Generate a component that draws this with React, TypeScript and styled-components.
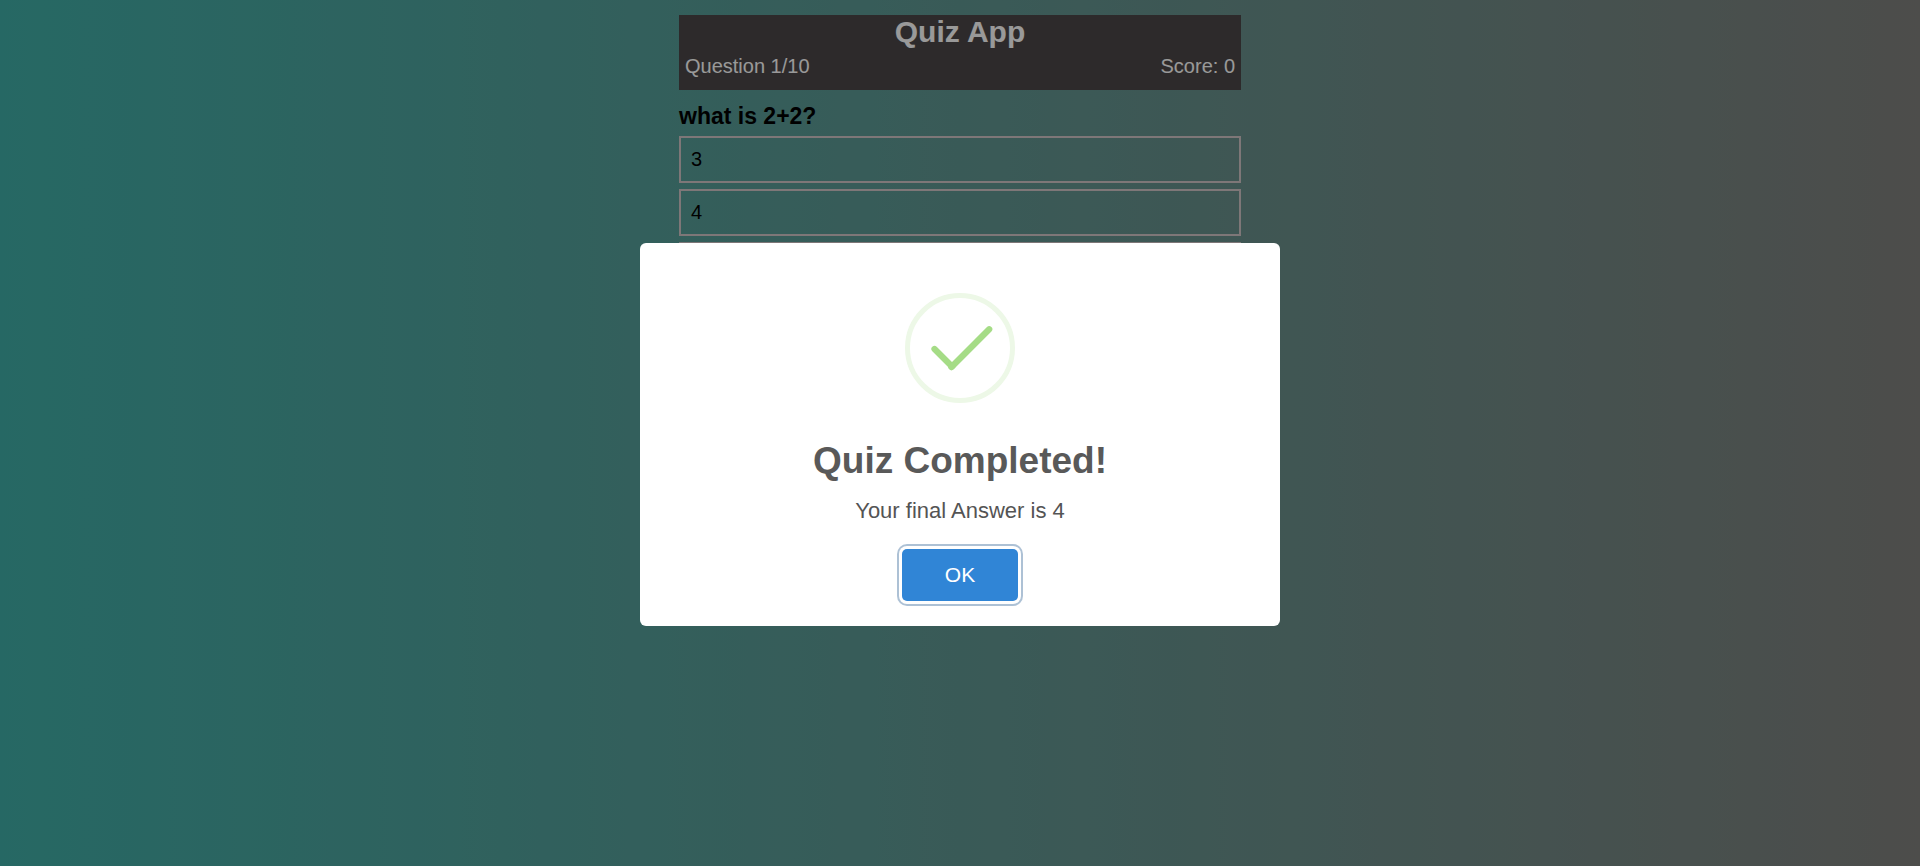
import React from "react";
import styled, { createGlobalStyle } from "styled-components";

const GlobalStyle = createGlobalStyle`
  *, *::before, *::after { box-sizing: border-box; }
  body {
    margin: 0;
    font-family: "Liberation Sans", Arial, Helvetica, sans-serif;
    color: #000;
  }
  h1, h2, p { margin: 0; }
`;

const Page = styled.div`
  min-height: 100vh;
  padding-top: 15px;
  background: linear-gradient(to right, #40aea7, #80807d);
`;

const Quiz = styled.main`
  width: 100%;
  max-width: 562px;
  margin: 0 auto;
`;

const Header = styled.header`
  display: flex;
  flex-direction: column;
  gap: 6px;
  padding: 0 6px 12px;
  background: #4c4748;
  color: #fff;
`;

const AppTitle = styled.h1`
  font-size: 30px;
  line-height: 34px;
  text-align: center;
`;

const Status = styled.div`
  display: flex;
  justify-content: space-between;
  font-size: 20px;
  line-height: 23px;
`;

const Question = styled.h2`
  margin: 13px 0 7px;
  font-size: 23px;
  line-height: 26px;
`;

const Options = styled.div`
  display: flex;
  flex-direction: column;
  gap: 6px;
`;

const Option = styled.button`
  padding: 10px;
  border: 2px solid #d2c6c8;
  background: transparent;
  color: #000;
  font: 20px/23px "Liberation Sans", Arial, sans-serif;
  text-align: left;
  cursor: pointer;
`;

const Backdrop = styled.div`
  position: fixed;
  inset: 0;
  display: flex;
  align-items: center;
  justify-content: center;
  padding: 15px 12px 12px;
  background: rgba(0, 0, 0, 0.4);
`;

const Dialog = styled.div`
  display: flex;
  flex-direction: column;
  align-items: center;
  width: 100%;
  max-width: 640px;
  padding: 50px 20px 25px;
  border-radius: 6px;
  background: #fff;
  color: #545454;
  text-align: center;
`;

const SuccessIcon = styled.svg`
  display: block;
  width: 110px;
  height: 110px;
`;

const DialogTitle = styled.h2`
  margin-top: 36px;
  color: #595959;
  font-size: 37px;
  line-height: 43px;
`;

const DialogText = styled.p`
  margin-top: 16px;
  font-size: 22px;
  line-height: 25px;
`;

const Confirm = styled.button`
  margin-top: 26px;
  width: 116px;
  height: 52px;
  padding: 0;
  border: 0;
  border-radius: 5px;
  outline: none;
  background: #3085d6;
  box-shadow: 0 0 0 3px #fff, 0 0 0 5px rgba(50, 100, 150, 0.4);
  color: #fff;
  font: 21px/24px "Liberation Sans", Arial, sans-serif;
  cursor: pointer;
`;

const answers = ["3", "4", "5"];

export default function App() {
  return (
    <>
      <GlobalStyle />
      <Page>
        <Quiz>
          <Header>
            <AppTitle>Quiz App</AppTitle>
            <Status>
              <span>Question 1/10</span>
              <span>Score: 0</span>
            </Status>
          </Header>
          <Question>what is 2+2?</Question>
          <Options>
            {answers.map((answer) => (
              <Option key={answer} type="button">
                {answer}
              </Option>
            ))}
          </Options>
        </Quiz>
      </Page>
      <Backdrop>
        <Dialog role="dialog" aria-modal="true" aria-labelledby="dialog-title">
          <SuccessIcon viewBox="0 0 110 110" fill="none" aria-hidden="true">
            <circle cx="55" cy="55" r="52.5" stroke="#edf8e7" strokeWidth="5" />
            <path
              d="M29.5 56 L47 73.5 L84.2 36.2"
              stroke="#a5dc86"
              strokeWidth="6.25"
              strokeLinecap="round"
              strokeLinejoin="round"
            />
            <path
              d="M47.6 72.9 L46.4 74.1"
              stroke="#a5dc86"
              strokeWidth="6.25"
              strokeLinecap="round"
            />
          </SuccessIcon>
          <DialogTitle id="dialog-title">Quiz Completed!</DialogTitle>
          <DialogText>Your final Answer is 4</DialogText>
          <Confirm type="button">OK</Confirm>
        </Dialog>
      </Backdrop>
    </>
  );
}
